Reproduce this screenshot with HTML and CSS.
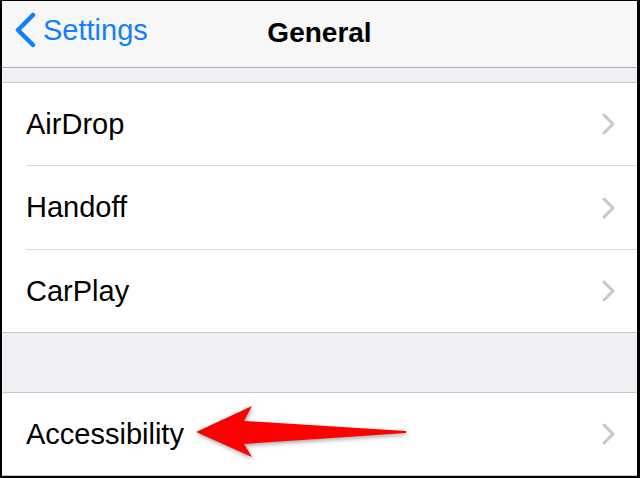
FILE: index.html
```html
<!DOCTYPE html>
<html lang="en">
<head>
    <meta charset="UTF-8">
    <title>General</title>
    <link rel="stylesheet" href="styles.css">
</head>
<body>

    <div class="screen">
        <div class="navbar">
            <div class="back">
                <svg class="back-icon" width="24" height="36" viewBox="0 0 24 36">
                    <polyline points="20,3 5,18 20,33" fill="none" stroke="#147efb" stroke-width="4.5" stroke-linecap="round" stroke-linejoin="round"/>
                </svg>
                <span>Settings</span>
            </div>
            <div class="title">General</div>
        </div>

        <div class="gap gap-small"></div>

        <div class="group">
            <div class="row">
                <span class="label">AirDrop</span>
                <svg class="chevron" width="14" height="22" viewBox="0 0 14 22"><polyline points="2,2 11,11 2,20" /></svg>
            </div>
            <div class="row row-tall">
                <span class="label">Handoff</span>
                <svg class="chevron" width="14" height="22" viewBox="0 0 14 22"><polyline points="2,2 11,11 2,20" /></svg>
            </div>
            <div class="row">
                <span class="label">CarPlay</span>
                <svg class="chevron" width="14" height="22" viewBox="0 0 14 22"><polyline points="2,2 11,11 2,20" /></svg>
            </div>
        </div>

        <div class="gap gap-large"></div>

        <div class="group">
            <div class="row">
                <span class="label">Accessibility</span>
                <svg class="chevron" width="14" height="22" viewBox="0 0 14 22"><polyline points="2,2 11,11 2,20" /></svg>
            </div>
        </div>

        <!-- annotation arrow -->
        <svg class="arrow" width="220" height="60" viewBox="0 0 220 60">
            <polygon points="2,26 58,0 50,15 212,25 212,27 50,38 58,51" fill="#ff0000"/>
        </svg>
    </div>

</body>
</html>
```

FILE: styles.css
```css
* {
    box-sizing: border-box;
}

body {
    margin: 0;
    font-family: 'Liberation Sans', Arial, sans-serif;
    background: #000;
}

.screen {
    position: relative;
    width: 640px;
    height: 478px;
    overflow: hidden;
    border-top: 1px solid #000;
    border-left: 2px solid #000;
    border-right: 3px solid #000;
    border-bottom: 2px solid #000;
    background: #efeff4;
}

.navbar {
    position: relative;
    height: 67px;
    background: #f7f7f7;
    border-bottom: 1px solid #adadb0;
    display: flex;
    align-items: center;
    justify-content: center;
}

.back {
    position: absolute;
    left: 11px;
    top: 11px;
    display: flex;
    align-items: center;
    color: #147efb;
    font-size: 29px;
}

.back-icon {
    margin-right: 6px;
}

.title {
    font-weight: bold;
    font-size: 28px;
    color: #000;
    margin-top: -3px;
}

.gap-small {
    height: 14px;
}

.gap-large {
    height: 59px;
}

.group {
    background: #fff;
    border-top: 1px solid #c8c7cc;
    border-bottom: 1px solid #c8c7cc;
}

.row {
    height: 83px;
    display: flex;
    align-items: center;
    justify-content: space-between;
    margin-left: 24px;
    padding-right: 21px;
    border-bottom: 1px solid #d9d9dd;
}

.row-tall {
    height: 84px;
}

.row:last-child {
    height: 82px;
    border-bottom: none;
}

.label {
    font-size: 29px;
    color: #000;
}

.chevron polyline {
    fill: none;
    stroke: #c7c7cc;
    stroke-width: 3;
    stroke-linecap: round;
    stroke-linejoin: round;
}

.arrow {
    position: absolute;
    left: 192px;
    top: 405px;
    filter: drop-shadow(1px 2px 2px rgba(0, 0, 0, 0.35));
}
```
